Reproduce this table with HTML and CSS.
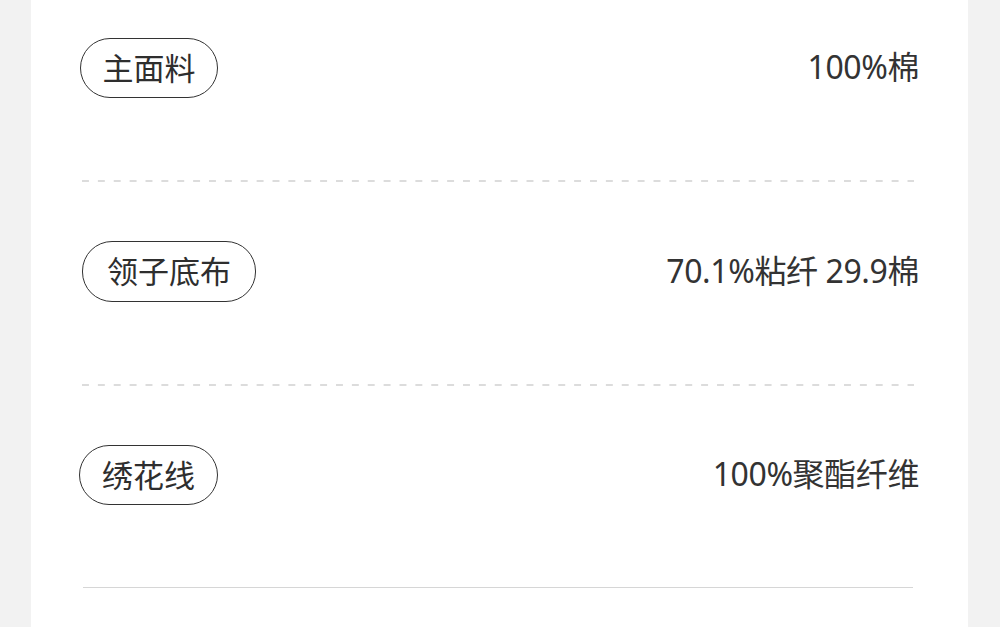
FILE: index.html
```html
<!DOCTYPE html>
<html lang="zh">
<head>
<meta charset="utf-8">
<title>面料</title>
<link rel="stylesheet" href="styles.css">
</head>
<body>
<div class="card">
  <div class="list">
    <div class="row first">
      <span class="pill p1">主面料</span>
      <span class="value">100%棉</span>
    </div>
    <div class="dash"></div>
    <div class="row">
      <span class="pill p2">领子底布</span>
      <span class="value">70.1%粘纤 29.9棉</span>
    </div>
    <div class="dash"></div>
    <div class="row last">
      <span class="pill p3">绣花线</span>
      <span class="value">100%聚酯纤维</span>
    </div>
    <div class="solid"></div>
  </div>
</div>
</body>
</html>
```

FILE: styles.css
```css
html, body {
  margin: 0;
  padding: 0;
  background: #f2f2f2;
  height: 627px;
  overflow: hidden;
}
body {
  font-family: "Noto Sans", "Noto Sans CJK SC", sans-serif;
  color: #333;
}
.card {
  margin-left: 31px;
  width: 937px;
  height: 627px;
  background: #fff;
}
.list {
  padding: 0 49px 0 49px;
}
.row {
  display: flex;
  align-items: center;
  justify-content: space-between;
  padding: 58px 0 83px;
}
.row.first {
  padding-top: 38px;
}
.row.last {
  padding-bottom: 82px;
}
.pill {
  box-sizing: border-box;
  height: 60px;
  display: flex;
  align-items: center;
  justify-content: center;
  border: 1px solid #333;
  border-radius: 30px;
  font-family: "Noto Sans CJK SC", sans-serif;
  font-size: 31px;
  font-weight: 400;
  line-height: 1;
  padding: 0 0 4px;
  color: #2e2e2e;
}
.p2 { margin-left: 2px; width: 174px; height: 61px; }
.p3 { margin-left: -1px; width: 139px; }
.p1 { width: 138px; }
.value {
  font-size: 32px;
  line-height: 1;
  letter-spacing: -0.4px;
  margin-top: -2px;
}
.dash {
  height: 2px;
  margin: -1px 5px 1px 2px;
  background-image: linear-gradient(to right, #dcdcdc 0 7px, transparent 7px 100%);
  background-size: 15.88px 2px;
}
.solid {
  height: 1px;
  margin: 0 6px 0 3px;
  background: #d6d6d6;
}
```
